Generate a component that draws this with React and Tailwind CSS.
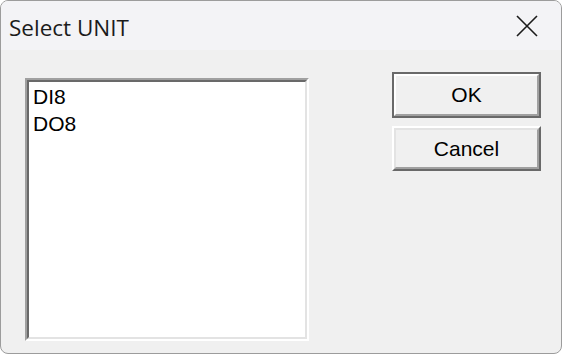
export default function App() {
  const items = ['DI8', 'DO8']

  return (
    <div className="w-[562px] h-[354px] bg-white">
      <div className="w-[562px] h-[354px] rounded-[8px] border border-[#9c9c9c] overflow-hidden flex flex-col bg-[#f0f0f0]">
        {/* title bar */}
        <div className="h-[49px] shrink-0 bg-[#f3f3f6] flex items-center justify-between pl-[8px] pr-[23px] pt-[4px]">
          <span className="text-[22.5px] text-[#1b1b1b] font-['Open_Sans',sans-serif]">Select UNIT</span>
          <svg width="22" height="22" viewBox="0 0 22 22" className="-mt-[3px]">
            <path d="M1 1 L21 21 M21 1 L1 21" stroke="#1b1b1b" strokeWidth="1.6" fill="none" />
          </svg>
        </div>

        {/* body */}
        <div className="flex flex-1 pl-[24px] pr-[20px] pt-[22px] font-['Liberation_Sans',Arial,sans-serif] text-black">
          <div className="mt-[6px] w-[284px] h-[263px] border-2 border-t-[#a0a0a0] border-l-[#a0a0a0] border-b-white border-r-white">
            <div className="h-full border-2 border-t-[#696969] border-l-[#696969] border-b-[#e3e3e3] border-r-[#e3e3e3] bg-white pl-[4px] pt-[1px]">
              {items.map(it => (
                <div key={it} className="text-[21px] leading-[27px]">{it}</div>
              ))}
            </div>
          </div>

          <div className="ml-auto w-[149px] flex flex-col gap-[8px]">
            <button className="h-[46px] border-2 border-[#696969] bg-[#f0f0f0] p-0">
              <div className="h-full border-2 border-t-white border-l-white border-b-[#a0a0a0] border-r-[#a0a0a0] flex items-center justify-center text-[21px]">
                OK
              </div>
            </button>
            <button className="h-[45px] border-2 border-t-white border-l-white border-b-[#696969] border-r-[#696969] bg-[#f0f0f0] p-0">
              <div className="h-full border-2 border-t-[#e3e3e3] border-l-[#e3e3e3] border-b-[#a0a0a0] border-r-[#a0a0a0] flex items-center justify-center text-[21px]">
                Cancel
              </div>
            </button>
          </div>
        </div>
      </div>
    </div>
  )
}
